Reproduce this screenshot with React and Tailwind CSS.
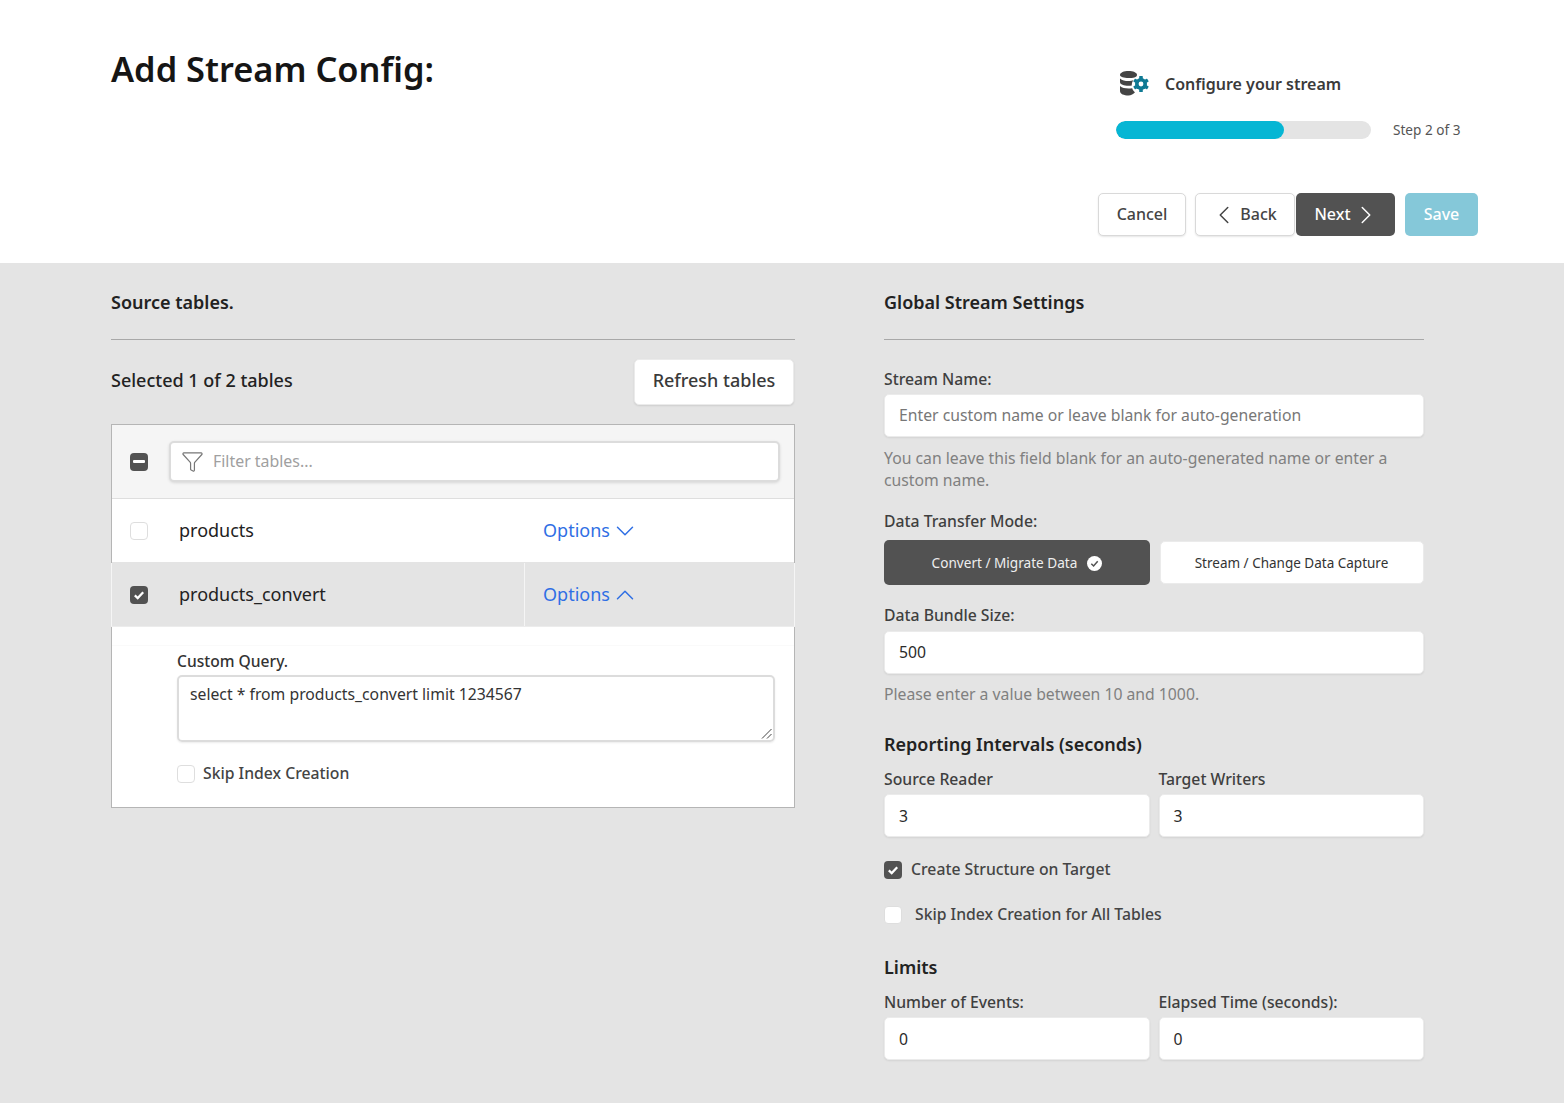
import React from "react";
import { ChevronLeft, ChevronRight, ChevronDown, ChevronUp, Funnel } from "lucide-react";

const Box = ({ state, className = "" }) => {
  if (state === "off")
    return <span className={`block w-[18px] h-[18px] rounded-[4px] bg-white border border-[#dedede] shrink-0 ${className}`} />;
  return (
    <span className={`flex items-center justify-center w-[18px] h-[18px] rounded-[4px] bg-[#525252] shrink-0 ${className}`}>
      {state === "on" ? (
        <svg width="12" height="12" viewBox="0 0 12 12" fill="none"><path d="M1.800 6.400 4.700 9.100 10.200 3.200" stroke="#fff" strokeWidth="2.200" /></svg>
      ) : (
        <span className="block w-[12px] h-[3px] bg-white rounded-[1px]" />
      )}
    </span>
  );
};

const Field = ({ value, placeholder, className = "" }) => (
  <div className={`h-[43px] bg-white rounded-[5px] border border-[#ebebeb] shadow-[0_1px_2px_rgba(0,0,0,0.08)] px-[14px] flex items-center text-[15.75px] ${placeholder ? "text-[#777777]" : "text-[#2b2b2b]"} ${className}`}>
    <span className="mt-[1px]">{value || placeholder}</span>
  </div>
);

const Label = ({ children, className = "" }) => (
  <div className={`text-[15.75px] leading-[22px] font-medium text-[#3f3f3f] ${className}`}>{children}</div>
);

const H = ({ children, className = "" }) => (
  <div className={`text-[18px] leading-[24px] font-semibold text-[#222222] ${className}`}>{children}</div>
);

const Btn = ({ children, className = "" }) => (
  <div className={`h-[43px] rounded-[5px] flex items-center justify-center text-[16px] font-medium ${className}`}>{children}</div>
);

const whiteBtn = "bg-white border border-[#d9d9d9] text-[#444444] shadow-[0_1px_2px_rgba(0,0,0,0.1)]";

export default function App() {
  return (
    <div className="w-[1564px] h-[1103px] overflow-hidden bg-[#e4e4e4] font-['Noto_Sans',sans-serif]">
      <header className="h-[263px] bg-white flex justify-between pl-[111px] pr-[86px]">
        <h1 className="mt-[45px] text-[34.4px] leading-[48px] font-semibold text-[#151515]">Add Stream Config:</h1>
        <div className="flex flex-col items-end">
          <div className="w-[362px] pt-[70px] self-end">
            <div className="flex items-center h-[28px] pl-[4px]">
              <svg width="30" height="27" viewBox="0 0 30 27" className="shrink-0">
                <g fill="#444444">
                  <path d="M0 4C0 1.500 4 0 8.500 0S17 1.500 17 4 13 7 8.500 7 0 6 0 4Z" />
                  <path d="M0 7.500C2 9.500 5 10 8.500 10c2 0 3.500-.2 5-.7-1.200 1.300-1.800 3-1.700 5.200-1 .2-2 .3-3.300.3C4 14.800 0 13.500 0 11Z" />
                  <path d="M0 15c2 1.800 5 2.500 8.500 2.500 1.300 0 2.500-.1 3.700-.3.500 1.800 1.500 3 2.800 4-1.500 1.800-4 3.300-6.500 3.300C4 24.500 0 23 0 20Z" />
                </g>
                <g transform="translate(21 13)" fill="#0f7a94">
                  <circle r="6" />
                  <rect x="-1.800" y="-8" width="3.600" height="16" rx=".6" />
                  <rect x="-1.800" y="-8" width="3.600" height="16" rx=".6" transform="rotate(60)" />
                  <rect x="-1.800" y="-8" width="3.600" height="16" rx=".6" transform="rotate(120)" />
                  <circle r="2.400" fill="#fff" />
                </g>
              </svg>
              <span className="ml-[15px] text-[16px] font-semibold text-[#3a3a3a]">Configure your stream</span>
            </div>
            <div className="flex items-center mt-[22px]">
              <div className="w-[255px] h-[18px] rounded-full bg-[#e4e4e4] overflow-hidden">
                <div className="w-[168px] h-full rounded-full bg-[#06b6d4]" />
              </div>
              <span className="ml-[22px] text-[13.6px] text-[#555555]">Step 2 of 3</span>
            </div>
          </div>
          <div className="flex mt-[53px]">
            <Btn className={`w-[88px] ${whiteBtn}`}><span className="mb-[2px]">Cancel</span></Btn>
            <Btn className={`ml-[9px] w-[100px] gap-px ${whiteBtn}`}>
              <ChevronLeft size={30} strokeWidth={1.2} className="-ml-[4px]" /><span className="mb-[2px]">Back</span>
            </Btn>
            <Btn className="ml-[1px] w-[99px] bg-[#525252] text-white">
              <span className="mb-[2px]">Next</span><ChevronRight size={30} strokeWidth={1.2} className="-mr-[4px]" />
            </Btn>
            <Btn className="ml-[10px] w-[73px] bg-[#85c8d9] text-white"><span className="mb-[2px]">Save</span></Btn>
          </div>
        </div>
      </header>

      <main className="flex pl-[111px]">
        <section className="w-[684px]">
          <H className="mt-[27px]">Source tables.</H>
          <div className="mt-[25px] h-px bg-[#a8a8a8]" />
          <div className="flex items-center justify-between mt-[19px] h-[46px] pr-px">
            <span className="mb-[4px] text-[18px] font-medium text-[#222222]">Selected 1 of 2 tables</span>
            <div className="w-[160px] h-[46px] bg-white rounded-[5px] border border-[#ebebeb] shadow-[0_1px_2px_rgba(0,0,0,0.1)] flex items-center justify-center text-[18px] font-medium text-[#3a3a3a]"><span className="mb-[3px]">Refresh tables</span></div>
          </div>
          <div className="mt-[19px] h-[384px] border border-[#b5b5b5] bg-white">
            <div className="h-[74px] bg-[#f5f5f5] border-b border-[#dedede] flex items-center pl-[18px]">
              <Box state="mixed" />
              <div className="ml-[21px] w-[611px] h-[41px] bg-white rounded-[5px] border-2 border-[#dcdcdc] shadow-[0_1px_3px_rgba(0,0,0,0.12)] flex items-center pl-[10px] text-[15.9px] text-[#a0a0a0]">
                <Funnel size={23} strokeWidth={1.25} className="text-[#777777] shrink-0" />
                <span className="ml-[9px]">Filter tables...</span>
              </div>
            </div>
            <div className="h-[64px] flex items-center pl-[18px] border-b border-[#e4e4e4]">
              <Box state="off" />
              <span className="ml-[31px] w-[364px] text-[18px] text-[#222222]">products</span>
              <span className="flex items-center text-[18px] text-[#2f6fe4]">Options<ChevronDown size={30} strokeWidth={1.2} className="mt-[1px]" /></span>
            </div>
            <div className="h-[64px] -mx-px border-x border-[#f5f5f5] flex items-center pl-[18px] bg-[#e4e4e4] border-b-[#ececec] border-b">
              <Box state="on" />
              <span className="ml-[31px] w-[345px] text-[18px] text-[#222222]">products_convert</span>
              <div className="h-full w-px bg-[#f5f5f5]" />
              <span className="ml-[18px] flex items-center text-[18px] text-[#2f6fe4]">Options<ChevronUp size={30} strokeWidth={1.2} className="mt-[1px]" /></span>
            </div>
            <div className="h-[19px] border-b border-[#fafafa]" />
            <div className="pl-[65px] pr-[19px] pt-[4px]">
              <div className="text-[15.6px] leading-[22px] font-medium text-[#333333]">Custom Query.</div>
              <div className="relative mt-[3px] h-[67px] rounded-[5px] border-2 border-[#dcdcdc] shadow-[0_1px_2px_rgba(0,0,0,0.08)] px-[11px] pt-[6px] text-[15.75px] leading-[22px] text-[#333333]">
                select * from products_convert limit 1234567
                <svg width="12" height="12" viewBox="0 0 12 12" className="absolute right-[0px] bottom-[0px]">
                  <path d="M1 10.500 10.500 1M6 10.500 10.500 6" stroke="#444444" strokeWidth="1" />
                </svg>
              </div>
              <div className="flex items-center mt-[20px]">
                <Box state="off" />
                <span className="ml-[8px] text-[15.75px] font-medium text-[#444444]">Skip Index Creation</span>
              </div>
            </div>
          </div>
        </section>

        <section className="ml-[89px] w-[540px]">
          <H className="mt-[27px]">Global Stream Settings</H>
          <div className="mt-[25px] h-px bg-[#a8a8a8]" />
          <Label className="mt-[28px]">Stream Name:</Label>
          <Field className="mt-[4px]" placeholder="Enter custom name or leave blank for auto-generation" />
          <p className="mt-[10px] text-[15.75px] leading-[22px] text-[#808080]">You can leave this field blank for an auto-generated name or enter a custom name.</p>
          <Label className="mt-[19px]">Data Transfer Mode:</Label>
          <div className="mt-[8px] grid grid-cols-[266px_264px] gap-[10px]">
            <div className="h-[45px] pt-px rounded-[5px] bg-[#525252] flex items-center justify-center gap-[10px] text-[13.6px] text-[#eeeeee]">
              Convert / Migrate Data
              <svg width="15" height="15" viewBox="0 0 15 15"><circle cx="7.500" cy="7.500" r="7.500" fill="#fff" /><path d="M4.300 7.700 6.600 10 10.700 5.300" fill="none" stroke="#525252" strokeWidth="1.500" /></svg>
            </div>
            <div className="h-[43px] mt-px pt-px pr-px rounded-[5px] bg-white border border-[#ebebeb] flex items-center justify-center text-[13.5px] text-[#333333]">Stream / Change Data Capture</div>
          </div>
          <Label className="mt-[19px]">Data Bundle Size:</Label>
          <Field className="mt-[5px]" value="500" />
          <p className="mt-[9px] text-[15.75px] leading-[22px] text-[#808080]">Please enter a value between 10 and 1000.</p>
          <H className="mt-[27px]">Reporting Intervals (seconds)</H>
          <div className="mt-[12px] grid grid-cols-2 gap-[9px]">
            <div><Label>Source Reader</Label><Field className="mt-[4px] pt-[2px]" value="3" /></div>
            <div><Label>Target Writers</Label><Field className="mt-[4px] pt-[2px]" value="3" /></div>
          </div>
          <div className="flex items-center mt-[22px] h-[22px]">
            <Box state="on" />
            <span className="ml-[9px] text-[15.75px] font-medium text-[#444444]">Create Structure on Target</span>
          </div>
          <div className="flex items-center mt-[23px] h-[22px]">
            <Box state="off" />
            <span className="ml-[13px] text-[15.75px] font-medium text-[#444444]">Skip Index Creation for All Tables</span>
          </div>
          <H className="mt-[29px]">Limits</H>
          <div className="mt-[12px] grid grid-cols-2 gap-[9px]">
            <div><Label>Number of Events:</Label><Field className="mt-[4px] pt-[2px]" value="0" /></div>
            <div><Label>Elapsed Time (seconds):</Label><Field className="mt-[4px] pt-[2px]" value="0" /></div>
          </div>
        </section>
      </main>
    </div>
  );
}
